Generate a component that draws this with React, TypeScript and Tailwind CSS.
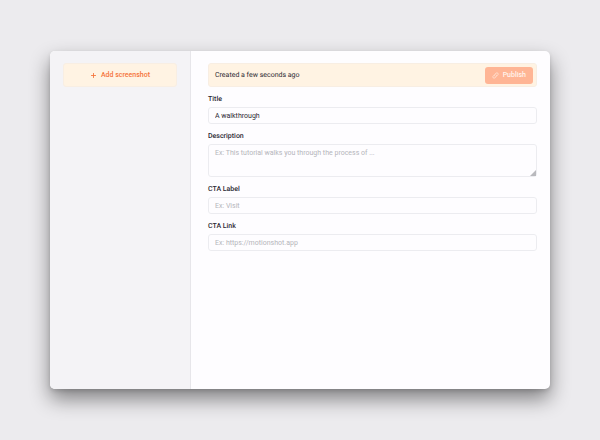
import { Plus } from 'lucide-react'

const INPUT =
  'block w-full rounded-[3px] border border-[#ececf0] bg-[#fefdff] px-1.5 text-[7px] text-[#2c2a33] outline-none placeholder:text-[#b5b5bb] focus:border-orange-300'

const FIELDS = [
  { id: 'title', label: 'Title', value: 'A walkthrough', placeholder: 'Ex: A walkthrough' },
  { id: 'description', label: 'Description', placeholder: 'Ex: This tutorial walks you through the process of ...', multiline: true },
  { id: 'cta-label', label: 'CTA Label', placeholder: 'Ex: Visit' },
  { id: 'cta-link', label: 'CTA Link', placeholder: 'Ex: https://motionshot.app' },
]

type FieldProps = {
  id: string
  label: string
  placeholder: string
  value?: string
  multiline?: boolean
}

function Field({ id, label, placeholder, value, multiline }: FieldProps) {
  return (
    <div className="mt-1.5">
      <label htmlFor={id} className="mb-0.5 block text-[7px] leading-3 font-medium text-[#2c2a33]">
        {label}
      </label>
      {multiline ? (
        <div className="relative">
          <textarea
            id={id}
            placeholder={placeholder}
            defaultValue={value}
            className={`${INPUT} h-[33px] resize-none py-0.5 leading-3`}
          />
          {/* resize grip */}
          <svg viewBox="0 0 6 6" className="pointer-events-none absolute right-px bottom-px size-1.5">
            <path d="M6 0v6H0z" fill="#b9b9bd" />
          </svg>
        </div>
      ) : (
        <input id={id} type="text" placeholder={placeholder} defaultValue={value} className={`${INPUT} h-[17px]`} />
      )}
    </div>
  )
}

export default function App() {
  return (
    <div className="flex min-h-screen bg-[#ecebee] px-[50px] py-[51px] font-['Roboto',sans-serif] text-[7px] text-[#2c2a33] [text-rendering:geometricPrecision]">
      <div className="flex flex-1 overflow-hidden rounded-[5px] bg-[#fefdff] shadow-[0_10px_20px_rgba(0,0,0,0.45),0_2px_4px_rgba(0,0,0,0.12)]">
        {/* SIDEBAR */}
        <aside className="w-[141px] shrink-0 border-r border-[#e7e6ea] bg-[#f4f3f6] px-[13px] py-3">
          <button
            type="button"
            className="flex h-6 w-full items-center justify-center gap-1 rounded-[3px] border border-[#f8eee3] bg-[#fff3e3] font-medium text-[#f5733a]"
          >
            <Plus className="size-[7px]" strokeWidth={3} />
            Add screenshot
          </button>
        </aside>

        {/* EDITOR */}
        <main className="min-w-0 flex-1 py-3 pr-[13px] pl-[17px]">
          <div className="flex h-6 items-center justify-between rounded-[3px] border border-[#f8eee3] bg-[#fff3e3] pr-[3px] pl-1.5">
            <span>Created a few seconds ago</span>
            <button
              type="button"
              disabled
              className="flex h-[17px] items-center gap-1 rounded-[3px] bg-[#ffb595] px-[7px] font-medium text-[#fff4ec]"
            >
              <svg
                viewBox="0 0 24 24"
                fill="none"
                stroke="currentColor"
                strokeWidth="2"
                strokeLinecap="round"
                strokeLinejoin="round"
                className="size-[7px]"
              >
                <path d="M13.2 8.7a4.5 4.5 0 0 1 1.2 7.2l-4.5 4.5a4.5 4.5 0 0 1-6.3-6.3l1.7-1.8m13.4-.6 1.7-1.8a4.5 4.5 0 0 0-6.3-6.3L9.6 8.1a4.5 4.5 0 0 0 1.2 7.2" />
              </svg>
              Publish
            </button>
          </div>
          <form>
            {FIELDS.map((f) => (
              <Field key={f.id} {...f} />
            ))}
          </form>
        </main>
      </div>
    </div>
  )
}
